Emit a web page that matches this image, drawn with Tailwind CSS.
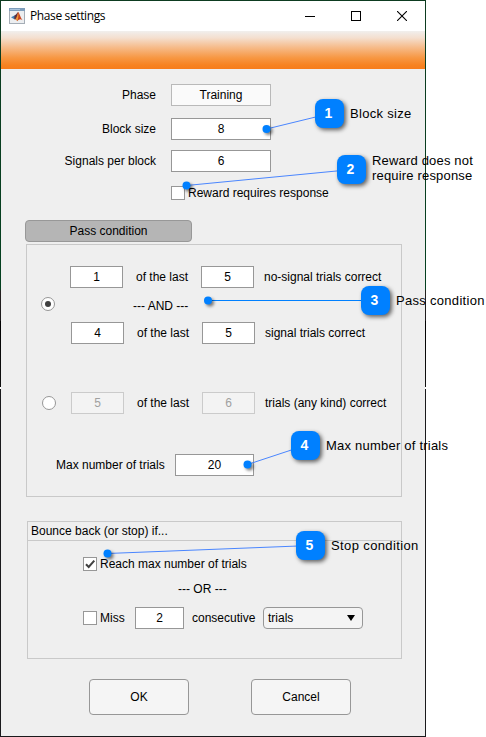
<!DOCTYPE html>
<html lang="en">
<head>
<meta charset="utf-8">
<title>Phase settings</title>
<script src="https://cdn.jsdelivr.net/npm/@tailwindcss/browser@4"></script>
</head>
<body class="relative h-[737px] w-[486px] overflow-hidden bg-white font-['Liberation_Sans',Arial,sans-serif] text-[12px] leading-[14px] text-black">
<main class="h-[737px] w-[426px] bg-[linear-gradient(#0d3b20_0px,#04401f_289px,#25201f_291px,#1c1a1c_321px,#000_321px,#111_387px,#fff_387px,#fff_389px,#1a1a1c_389px)] p-px">
  <div class="flex h-[735px] w-[424px] flex-col bg-[#efefef]">
    <header class="flex h-[30px] shrink-0 items-center bg-white pl-2">
      <svg class="mr-[5px] size-4" viewBox="0 0 16 16">
        <rect x=".5" y=".5" width="15" height="15" fill="#eceef0" stroke="#a5adb6"/>
        <rect x="0" y="0" width="16" height="3" fill="#7d9dbb"/>
        <rect x="1" y="1" width="10" height="1" fill="#a9c4dc"/>
        <path d="M2 9.2 5.5 7.6 7.5 8.6 5.2 11.2Z" fill="#3f7fb5"/>
        <path d="M5.5 7.6C7.3 7 8 4.5 9.2 4L8.2 9.6 6.3 11.6 5.2 11.2Z" fill="#5a3140"/>
        <path d="M9.2 4C10.4 4.8 11.5 9.5 13.5 12.2 11.5 10.6 10.2 11.2 8.2 13.2 7.7 12 7.2 11.4 6.3 11.6 8 9.5 8.3 5 9.2 4Z" fill="#c9441f"/>
        <path d="M9.2 4.4C9.7 7.2 9.4 10.2 8.2 13.1 7.7 12 7.2 11.4 6.3 11.6 8 9.5 8.6 7 9.2 4.4Z" fill="#ee9b3a"/>
      </svg>
      <h1 class="grow whitespace-nowrap font-['Open_Sans',sans-serif] text-[12px] leading-4 tracking-[-0.38px]">Phase settings</h1>
      <div class="flex gap-9 pr-[18px]">
        <svg class="size-[10px]" viewBox="0 0 10 10" shape-rendering="crispEdges"><path d="M0 5.5H10" stroke="#000"/></svg>
        <svg class="size-[10px]" viewBox="0 0 10 10" shape-rendering="crispEdges"><rect x=".5" y=".5" width="9" height="9" fill="none" stroke="#000"/></svg>
        <svg class="size-[10px]" viewBox="0 0 10 10"><path d="M0 0 10 10M10 0 0 10" stroke="#000" stroke-width="1.1"/></svg>
      </div>
    </header>
    <div class="h-[38px] shrink-0 bg-[linear-gradient(#f1efed_0%,#f4dfcf_18%,#f6bd8d_42%,#f79844_70%,#f78220_90%,#f77d1b_100%)]"></div>

    <section class="flex flex-col pt-[15px]">
      <div class="flex h-[22px] items-center"><span class="mr-[15px] w-[155px] text-right">Phase</span><div class="flex h-[22px] w-[100px] items-center justify-center border border-[#b9b9b9] bg-[#fafafa]">Training</div></div>
      <div class="mt-3 flex h-[22px] items-center"><span class="mr-[15px] w-[155px] text-right">Block size</span><div class="flex h-[22px] w-[100px] items-center justify-center border border-[#979797] bg-white">8</div></div>
      <div class="mt-[10px] flex h-[22px] items-center"><span class="mr-[15px] w-[155px] text-right">Signals per block</span><div class="flex h-[22px] w-[100px] items-center justify-center border border-[#979797] bg-white">6</div></div>
      <label class="mt-[14px] flex h-[14px] items-center pl-[170px]"><span class="mr-[3px] size-[14px] border border-[#979797] bg-white"></span>Reward requires response</label>
    </section>

    <div class="mt-5 ml-6 flex h-[22px] w-[167px] shrink-0 items-center justify-center rounded-[4px] border border-[#989898] bg-[#b5b5b5]">Pass condition</div>

    <section class="mt-[2px] ml-[25px] flex h-[253px] w-[376px] shrink-0 flex-col border border-[#c9c9c9]">
      <div class="mt-[21px] flex h-[22px] items-center whitespace-nowrap pl-[43px]">
        <div class="flex h-[22px] w-[53px] items-center justify-center border border-[#979797] bg-white">1</div>
        <span class="ml-[13px] w-[65px]">of the last</span>
        <div class="mr-[10px] flex h-[22px] w-[53px] items-center justify-center border border-[#979797] bg-white">5</div>
        <span>no-signal trials correct</span>
      </div>
      <div class="mt-[9px] flex h-[14px] pl-[14px]">
        <span class="flex size-[14px] items-center justify-center rounded-full border border-[#979797] bg-white"><span class="size-[6px] rounded-full bg-[#404040]"></span></span>
        <span class="mt-[2px] ml-[78px]">--- AND ---</span>
      </div>
      <div class="mt-[11px] flex h-[22px] items-center whitespace-nowrap pl-[44px]">
        <div class="flex h-[22px] w-[53px] items-center justify-center border border-[#979797] bg-white">4</div>
        <span class="ml-[13px] w-[65px]">of the last</span>
        <div class="mr-[10px] flex h-[22px] w-[53px] items-center justify-center border border-[#979797] bg-white">5</div>
        <span>signal trials correct</span>
      </div>
      <div class="mt-12 flex h-[22px] items-center whitespace-nowrap pl-[15px]">
        <span class="mr-[15px] size-[14px] rounded-full border border-[#979797] bg-white"></span>
        <div class="flex h-[22px] w-[53px] items-center justify-center border border-[#cbcbcb] bg-[#f3f3f3] text-[#a0a0a0]">5</div>
        <span class="ml-[13px] w-[65px]">of the last</span>
        <div class="mr-[10px] flex h-[22px] w-[53px] items-center justify-center border border-[#cbcbcb] bg-[#f3f3f3] text-[#a0a0a0]">6</div>
        <span>trials (any kind) correct</span>
      </div>
      <div class="mt-10 flex h-[22px] items-center pl-[29px]">
        <span class="w-[119px] whitespace-nowrap">Max number of trials</span>
        <div class="flex h-[22px] w-[79px] items-center justify-center border border-[#979797] bg-white">20</div>
      </div>
    </section>

    <section class="mt-6 ml-[26px] flex h-[138px] w-[375px] shrink-0 flex-col border border-[#c9c9c9]">
      <h2 class="h-[19px] border-b border-[#c9c9c9] pt-[2px] pl-[3px]">Bounce back (or stop) if...</h2>
      <label class="mt-4 flex h-[14px] items-center pl-[55px]">
        <svg class="mr-[3px] size-[14px]" viewBox="0 0 14 14"><rect x=".5" y=".5" width="13" height="13" fill="#fff" stroke="#979797"/><path d="M3 7.2 5.7 10 11.3 3.6" fill="none" stroke="#404040" stroke-width="2"/></svg>
        Reach max number of trials
      </label>
      <p class="mt-[11px] pl-[150px]">--- OR ---</p>
      <div class="mt-[11px] flex h-[22px] items-center pl-[55px]">
        <span class="mr-[3px] size-[14px] border border-[#979797] bg-white"></span>
        <span class="w-[35px]">Miss</span>
        <div class="flex h-[22px] w-[49px] items-center justify-center border border-[#979797] bg-white">2</div>
        <span class="ml-2 w-[71px]">consecutive</span>
        <div class="flex h-[22px] w-[100px] items-center justify-between rounded-[4px] border border-[#979797] bg-[#f4f4f4] pr-[7px] pl-1">trials<svg class="h-[6px] w-2" viewBox="0 0 8 6"><path d="M0 0H8L4 6Z"/></svg></div>
      </div>
    </section>

    <footer class="mt-5 flex gap-[62px] pl-[88px]">
      <div class="flex h-9 w-[100px] items-center justify-center rounded-[4px] border border-[#979797] bg-[#f5f5f5]">OK</div>
      <div class="flex h-9 w-[100px] items-center justify-center rounded-[4px] border border-[#979797] bg-[#f5f5f5]">Cancel</div>
    </footer>
  </div>
</main>

<!-- Callouts over the dialog -->
<svg class="absolute top-0 left-0 h-[737px] w-[486px]" viewBox="0 0 486 737">
  <g stroke="#4a86ff" stroke-width="1"><path d="M266.5 129 330 113.5M186.5 185.5 352 169.5M247.5 464.5 305 445.5M107.5 553.5 311 545.5"/><path d="M208 300.5H376" stroke="#0080ff"/></g>
  <g fill="#0080ff" class="[filter:drop-shadow(2px_2px_1.5px_rgb(0_0_0/0.5))]"><circle cx="266.5" cy="129" r="4"/><circle cx="186.5" cy="185.5" r="4"/><circle cx="208" cy="300.5" r="4"/><circle cx="247.5" cy="464.5" r="4"/><circle cx="107.5" cy="553.5" r="4"/></g>
</svg>
<div class="absolute top-[99px] left-[315px] flex h-[29px] items-center gap-[6px] whitespace-nowrap text-[13px] leading-[15px] tracking-[0.3px]"><b class="flex size-[29px] items-center justify-center rounded-[8px] bg-[#0080ff] pr-[2px] text-[14px] text-white shadow-[2px_2px_4px_rgb(0_0_0/0.6)]">1</b>Block size</div>
<div class="absolute top-[155px] left-[337px] flex h-[29px] items-center gap-[6px] whitespace-nowrap text-[13px] leading-[15px] tracking-[0.18px]"><b class="flex size-[29px] items-center justify-center rounded-[8px] bg-[#0080ff] pr-[2px] text-[14px] text-white shadow-[2px_2px_4px_rgb(0_0_0/0.6)]">2</b><span class="-mt-1">Reward does not<br>require response</span></div>
<div class="absolute top-[286px] left-[361px] flex h-[29px] items-center gap-[6px] whitespace-nowrap text-[13px] leading-[15px] tracking-[0.3px]"><b class="flex size-[29px] items-center justify-center rounded-[8px] bg-[#0080ff] pr-[2px] text-[14px] text-white shadow-[2px_2px_4px_rgb(0_0_0/0.6)]">3</b>Pass condition</div>
<div class="absolute top-[431px] left-[291px] flex h-[29px] items-center gap-[6px] whitespace-nowrap text-[13px] leading-[15px] tracking-[0.22px]"><b class="flex size-[29px] items-center justify-center rounded-[8px] bg-[#0080ff] pr-[2px] text-[14px] text-white shadow-[2px_2px_4px_rgb(0_0_0/0.6)]">4</b>Max number of trials</div>
<div class="absolute top-[531px] left-[296px] flex h-[29px] items-center gap-[6px] whitespace-nowrap text-[13px] leading-[15px] tracking-[0.38px]"><b class="flex size-[29px] items-center justify-center rounded-[8px] bg-[#0080ff] pr-[2px] text-[14px] text-white shadow-[2px_2px_4px_rgb(0_0_0/0.6)]">5</b>Stop condition</div>
</body>
</html>
